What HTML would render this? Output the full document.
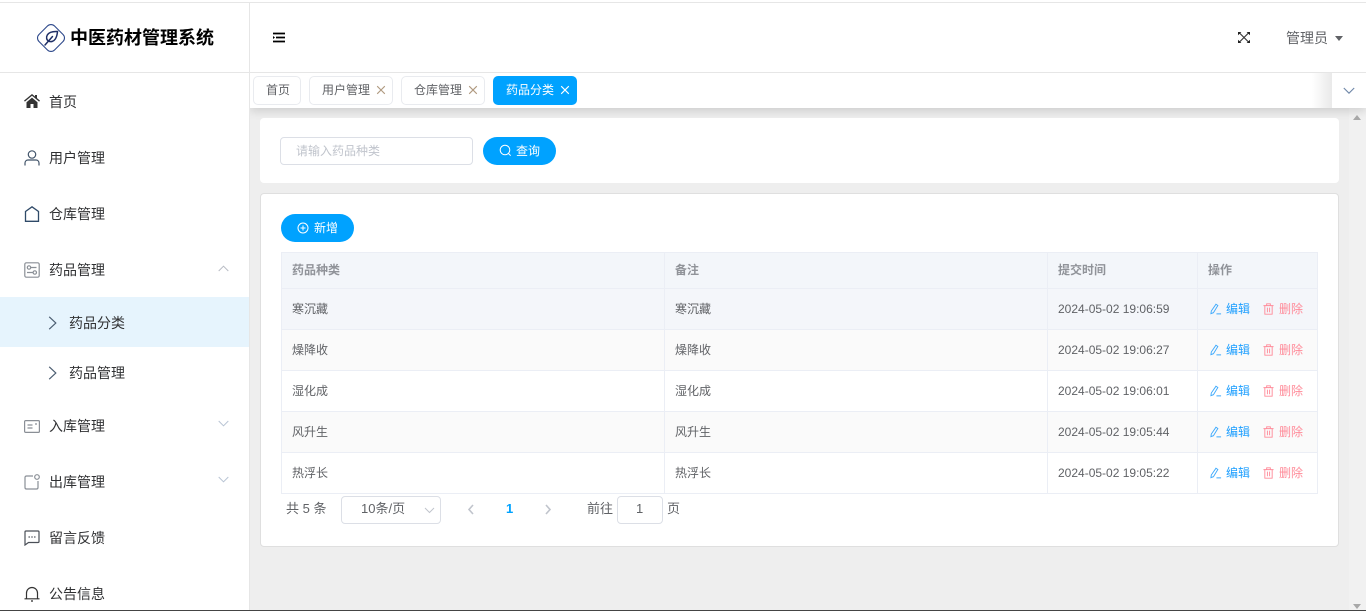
<!DOCTYPE html>
<html lang="zh-CN">
<head>
<meta charset="utf-8">
<title>中医药材管理系统</title>
<style>
*{box-sizing:border-box;margin:0;padding:0}
html,body{width:1366px;height:611px;overflow:hidden;background:#eeeeee}
body{position:relative;font-family:"Liberation Sans","Noto Sans CJK SC",sans-serif;font-size:13px;color:#606266}
.a{position:absolute}
.t{position:absolute;white-space:nowrap;line-height:20px}
svg{position:absolute;display:block;fill:none}
.menu{font-size:14px;color:#303133;left:49px}
.tag{position:absolute;top:76px;height:29px;border:1px solid #e9ebef;border-radius:5px;background:#fff;font-size:12px;line-height:27px;color:#606266;padding-left:12px;white-space:nowrap}
.tag i{position:absolute;right:6px;top:8px;width:10px;height:10px}
.cell{position:absolute;font-size:12px;line-height:20px;white-space:nowrap;color:#606266}
.hd{position:absolute;font-size:12px;font-weight:bold;line-height:20px;color:#909399;white-space:nowrap}
.row{position:absolute;left:281px;width:1037px;height:41px;border-bottom:1px solid #ebeef5}
.vl{position:absolute;top:252px;height:242px;width:1px;background:#ebeef5}
.blue{color:#1e9fff}.pink{color:#ff8b99}
</style>
</head>
<body>
<!-- scrollbar track -->
<div class="a" style="left:1349px;top:108px;width:17px;height:502px;background:#f1f1f1"></div>
<!-- top line -->
<div class="a" style="left:0;top:0;width:1366px;height:2px;background:#fff"></div>
<div class="a" style="left:0;top:2px;width:1366px;height:1px;background:#e6e6e6"></div>
<!-- header -->
<div class="a" style="left:0;top:3px;width:1366px;height:70px;background:#fff;border-bottom:1px solid #e6e6e6"></div>
<!-- sidebar -->
<div class="a" style="left:0;top:73px;width:250px;height:537px;background:#fff;border-right:1px solid #e6e6e6"></div>
<div class="a" style="left:249px;top:3px;width:1px;height:70px;background:#e6e6e6"></div>

<!-- logo -->
<svg style="left:35px;top:22px" width="32" height="32" viewBox="0 0 32 32">
<rect x="5" y="5" width="22" height="22" rx="5" transform="rotate(45 16 16)" stroke="#2f4a8c" stroke-width="1.100"/>
<path d="M22.500 9.500c-3.800-.2-8.400.4-10.200 3.500-1.400 2.400-.7 5 1.300 6.100 2.400 1.200 5.200.3 6.800-2.200 1.400-2.300 1.900-5 2.100-7.400zM17.500 14.500L10 23" stroke="#1f2f66" stroke-width="1.500" stroke-linecap="round"/>
</svg>
<div class="t" style="left:70px;top:26px;font-size:18px;font-weight:bold;color:#000;line-height:24px">中医药材管理系统</div>

<!-- hamburger -->
<svg style="left:273px;top:32px" width="12" height="11" viewBox="0 0 12 11">
<path d="M0 1.500h12M3 5.500h9M0 9.500h12" stroke="#000" stroke-width="1.800"/>
<path d="M0 4l2 1.500L0 7z" fill="#000"/>
</svg>

<!-- fullscreen icon -->
<svg style="left:1238px;top:32px" width="12" height="11" viewBox="0 0 12 11">
<path d="M1.500 1L10.500 10M10.500 1L1.500 10" stroke="#3a3a3a" stroke-width="1.200"/>
<path d="M0 0h3.400L0 3.200zM12 0H8.600L12 3.200zM0 11h3.400L0 7.800zM12 11H8.600L12 7.800z" fill="#222"/>
</svg>
<div class="t" style="left:1286px;top:28px;font-size:14px;color:#606266">管理员</div>
<div class="a" style="left:1335px;top:36px;width:0;height:0;border-left:4.500px solid transparent;border-right:4.500px solid transparent;border-top:5px solid #606266"></div>

<!-- tag bar -->
<div class="a" style="left:250px;top:73px;width:1116px;height:35px;background:#fff;box-shadow:0 3px 9px rgba(0,0,0,.14);clip-path:inset(0 0 -20px 0)"></div>
<div class="a" style="left:1312px;top:73px;width:20px;height:35px;background:linear-gradient(to right,rgba(238,238,238,0),#e9e9e9)"></div>
<div class="a" style="left:1332px;top:73px;width:34px;height:35px;background:#fff"></div>
<svg style="left:1343px;top:87px" width="12" height="8" viewBox="0 0 12 8"><path d="M.8 1l5.200 5.200L11.200 1" stroke="#6f87a8" stroke-width="1.100"/></svg>

<div class="tag" style="left:253px;width:48px">首页</div>
<div class="tag" style="left:309px;width:84px">用户管理<i><svg width="10" height="10" viewBox="0 0 10 10"><path d="M1.200 1.200l7.600 7.600M8.800 1.200L1.200 8.800" stroke="#b09a80" stroke-width="1.100"/></svg></i></div>
<div class="tag" style="left:401px;width:84px">仓库管理<i><svg width="10" height="10" viewBox="0 0 10 10"><path d="M1.200 1.200l7.600 7.600M8.800 1.200L1.200 8.800" stroke="#b09a80" stroke-width="1.100"/></svg></i></div>
<div class="tag" style="left:493px;width:84px;background:#00a2ff;border-color:#00a2ff;color:#fff">药品分类<i><svg width="10" height="10" viewBox="0 0 10 10"><path d="M1.200 1.200l7.600 7.600M8.800 1.200L1.200 8.800" stroke="#fff" stroke-width="1.100"/></svg></i></div>

<!-- scrollbar arrows -->
<div class="a" style="left:1353px;top:115px;width:0;height:0;border-left:4px solid transparent;border-right:4px solid transparent;border-bottom:5px solid #a8a8a8"></div>
<div class="a" style="left:1353px;top:604px;width:0;height:0;border-left:4px solid transparent;border-right:4px solid transparent;border-top:5px solid #a8a8a8"></div>

<!-- sidebar menu -->
<svg style="left:24px;top:94px" width="16" height="14" viewBox="0 0 16 14"><path d="M8 0L0 6.600l.9 1L8 1.800l7.100 5.800.9-1L13 4.100V1h-2v1.500zM2.500 8.200V14h4V10h3v4h4V8.200L8 3.600z" fill="#333"/></svg>
<div class="t menu" style="top:92px">首页</div>

<svg style="left:24px;top:150px" width="16" height="16" viewBox="0 0 16 16" stroke="#3f5268" stroke-width="1.200"><circle cx="8" cy="4.500" r="3.700"/><path d="M1 15.500v-2.500c0-1.700 1.300-3 3-3h8c1.700 0 3 1.300 3 3v2.500"/></svg>
<div class="t menu" style="top:148px">用户管理</div>

<svg style="left:24px;top:206px" width="16" height="16" viewBox="0 0 16 16" stroke="#2f4a68" stroke-width="1.300"><path d="M1.500 5.500L8 .8l6.500 4.700v9.800h-13z"/></svg>
<div class="t menu" style="top:204px">仓库管理</div>

<svg style="left:24px;top:262px" width="16" height="16" viewBox="0 0 16 16" stroke="#8a8f96" stroke-width="1.200"><rect x=".8" y=".8" width="14.400" height="14.400" rx="1.500"/><circle cx="5" cy="5.500" r="1.700"/><path d="M7 5.500h5.500M3 10.500h6"/><circle cx="10.800" cy="10.500" r="1.700"/></svg>
<div class="t menu" style="top:260px">药品管理</div>
<svg style="left:218px;top:265px" width="11" height="7" viewBox="0 0 11 7"><path d="M.7 6L5.500 1.200 10.300 6" stroke="#b8bcc4" stroke-width="1"/></svg>

<div class="a" style="left:0;top:297px;width:249px;height:50px;background:#e6f4fd"></div>
<svg style="left:48px;top:316px" width="9" height="14" viewBox="0 0 9 14"><path d="M1.200 .8L7.800 7l-6.600 6.200" stroke="#4a5c70" stroke-width="1.200"/></svg>
<div class="t menu" style="left:69px;top:313px">药品分类</div>
<svg style="left:48px;top:366px" width="9" height="14" viewBox="0 0 9 14"><path d="M1.200 .8L7.800 7l-6.600 6.200" stroke="#4a5c70" stroke-width="1.200"/></svg>
<div class="t menu" style="left:69px;top:363px">药品管理</div>

<svg style="left:24px;top:420px" width="16" height="13" viewBox="0 0 16 13" stroke="#8a8f96" stroke-width="1.200"><rect x=".6" y=".6" width="14.800" height="11.800" rx="1"/><path d="M3.500 5h5M3.500 8h5M11 4h2"/></svg>
<div class="t menu" style="top:416px">入库管理</div>
<svg style="left:218px;top:420px" width="11" height="7" viewBox="0 0 11 7"><path d="M.7 1l4.800 4.800L10.300 1" stroke="#b8c4d4" stroke-width="1"/></svg>

<svg style="left:24px;top:474px" width="16" height="16" viewBox="0 0 16 16" stroke="#8a8f96" stroke-width="1.200"><path d="M9 2H2.500C1.600 2 1 2.600 1 3.500v10c0 .9.600 1.500 1.500 1.500h10c.9 0 1.500-.6 1.500-1.500V7"/><circle cx="13" cy="3" r="2.300"/></svg>
<div class="t menu" style="top:472px">出库管理</div>
<svg style="left:218px;top:476px" width="11" height="7" viewBox="0 0 11 7"><path d="M.7 1l4.800 4.800L10.300 1" stroke="#b8c4d4" stroke-width="1"/></svg>

<svg style="left:24px;top:530px" width="16" height="16" viewBox="0 0 16 16" stroke="#4a4f57" stroke-width="1.200"><path d="M2 1h12c.6 0 1 .4 1 1v9.500c0 .6-.4 1-1 1H4.500L1 15V2c0-.6.400-1 1-1z"/><path d="M4.500 7h1.400M7.300 7h1.400M10.100 7h1.400" stroke-width="1.300"/></svg>
<div class="t menu" style="top:528px">留言反馈</div>

<svg style="left:24px;top:586px" width="16" height="16" viewBox="0 0 16 16" stroke="#333" stroke-width="1.200"><path d="M.5 12.800h15M2.500 12.800V7c0-3 2.400-5.500 5.500-5.500S13.500 4 13.500 7v5.800"/><path d="M7 15h2" stroke-width="1.300"/></svg>
<div class="t menu" style="top:584px">公告信息</div>

<!-- search card -->
<div class="a" style="left:260px;top:118px;width:1079px;height:65px;background:#fff;border-radius:4px"></div>
<div class="a" style="left:280px;top:137px;width:193px;height:28px;background:#fff;border:1px solid #dcdfe6;border-radius:4px"></div>
<div class="t" style="left:296px;top:141px;font-size:12px;color:#c0c4cc">请输入药品种类</div>
<div class="a" style="left:483px;top:137px;width:73px;height:28px;background:#00a2ff;border-radius:14px"></div>
<svg style="left:499px;top:144px" width="13" height="13" viewBox="0 0 13 13" stroke="#fff" stroke-width="1"><circle cx="6" cy="6" r="4.800"/><path d="M9.500 9.500l2.200 2.200"/></svg>
<div class="t" style="left:516px;top:141px;font-size:12px;color:#fff">查询</div>

<!-- table card -->
<div class="a" style="left:260px;top:193px;width:1079px;height:354px;background:#fff;border:1px solid #dfdfdf;border-radius:4px"></div>
<div class="a" style="left:281px;top:214px;width:73px;height:28px;background:#00a2ff;border-radius:14px"></div>
<svg style="left:297px;top:222px" width="12" height="12" viewBox="0 0 12 12" stroke="#fff" stroke-width="1"><circle cx="6" cy="6" r="5"/><path d="M6 3.500v5M3.500 6h5"/></svg>
<div class="t" style="left:314px;top:218px;font-size:12px;color:#fff">新增</div>

<!-- table -->
<div class="a" style="left:281px;top:252px;width:1037px;height:37px;background:#f3f6fa;border:1px solid #ebeef5"></div>
<div class="row" style="top:289px;background:#f4f6fa"></div>
<div class="row" style="top:330px;background:#fafafa"></div>
<div class="row" style="top:371px;background:#fff"></div>
<div class="row" style="top:412px;background:#fafafa"></div>
<div class="row" style="top:453px;background:#fff"></div>
<div class="vl" style="left:281px"></div>
<div class="vl" style="left:664px"></div>
<div class="vl" style="left:1047px"></div>
<div class="vl" style="left:1197px"></div>
<div class="vl" style="left:1317px"></div>

<div class="hd" style="left:292px;top:260px">药品种类</div>
<div class="hd" style="left:675px;top:260px">备注</div>
<div class="hd" style="left:1058px;top:260px">提交时间</div>
<div class="hd" style="left:1208px;top:260px">操作</div>

<div class="cell" style="left:292px;top:299px">寒沉藏</div><div class="cell" style="left:675px;top:299px">寒沉藏</div><div class="cell" style="left:1058px;top:299px">2024-05-02 19:06:59</div>
<div class="cell" style="left:292px;top:340px">燥降收</div><div class="cell" style="left:675px;top:340px">燥降收</div><div class="cell" style="left:1058px;top:340px">2024-05-02 19:06:27</div>
<div class="cell" style="left:292px;top:381px">湿化成</div><div class="cell" style="left:675px;top:381px">湿化成</div><div class="cell" style="left:1058px;top:381px">2024-05-02 19:06:01</div>
<div class="cell" style="left:292px;top:422px">风升生</div><div class="cell" style="left:675px;top:422px">风升生</div><div class="cell" style="left:1058px;top:422px">2024-05-02 19:05:44</div>
<div class="cell" style="left:292px;top:463px">热浮长</div><div class="cell" style="left:675px;top:463px">热浮长</div><div class="cell" style="left:1058px;top:463px">2024-05-02 19:05:22</div>

<!-- actions row 1 -->
<svg style="left:1210px;top:303px" width="12" height="12" viewBox="0 0 13 12" stroke="#3da9fc" stroke-width="1"><path d="M6.500 .8l2 1.400L3.700 10 1 11l.4-2.800zM7 11.300h5"/></svg>
<div class="cell blue" style="left:1226px;top:299px">编辑</div>
<svg style="left:1263px;top:303px" width="11" height="12" viewBox="0 0 12 13" stroke="#ff8b99" stroke-width="1"><path d="M.5 2.800h11M4 2.800V.8h4v2M2 2.800v9.400h8V2.800M4.800 5v5M7.200 5v5"/></svg>
<div class="cell pink" style="left:1279px;top:299px">删除</div>
<!-- row 2 -->
<svg style="left:1210px;top:344px" width="12" height="12" viewBox="0 0 13 12" stroke="#3da9fc" stroke-width="1"><path d="M6.500 .8l2 1.400L3.700 10 1 11l.4-2.800zM7 11.300h5"/></svg>
<div class="cell blue" style="left:1226px;top:340px">编辑</div>
<svg style="left:1263px;top:344px" width="11" height="12" viewBox="0 0 12 13" stroke="#ff8b99" stroke-width="1"><path d="M.5 2.800h11M4 2.800V.8h4v2M2 2.800v9.400h8V2.800M4.800 5v5M7.200 5v5"/></svg>
<div class="cell pink" style="left:1279px;top:340px">删除</div>
<!-- row 3 -->
<svg style="left:1210px;top:385px" width="12" height="12" viewBox="0 0 13 12" stroke="#3da9fc" stroke-width="1"><path d="M6.500 .8l2 1.400L3.700 10 1 11l.4-2.800zM7 11.300h5"/></svg>
<div class="cell blue" style="left:1226px;top:381px">编辑</div>
<svg style="left:1263px;top:385px" width="11" height="12" viewBox="0 0 12 13" stroke="#ff8b99" stroke-width="1"><path d="M.5 2.800h11M4 2.800V.8h4v2M2 2.800v9.400h8V2.800M4.800 5v5M7.200 5v5"/></svg>
<div class="cell pink" style="left:1279px;top:381px">删除</div>
<!-- row 4 -->
<svg style="left:1210px;top:426px" width="12" height="12" viewBox="0 0 13 12" stroke="#3da9fc" stroke-width="1"><path d="M6.500 .8l2 1.400L3.700 10 1 11l.4-2.800zM7 11.300h5"/></svg>
<div class="cell blue" style="left:1226px;top:422px">编辑</div>
<svg style="left:1263px;top:426px" width="11" height="12" viewBox="0 0 12 13" stroke="#ff8b99" stroke-width="1"><path d="M.5 2.800h11M4 2.800V.8h4v2M2 2.800v9.400h8V2.800M4.800 5v5M7.200 5v5"/></svg>
<div class="cell pink" style="left:1279px;top:422px">删除</div>
<!-- row 5 -->
<svg style="left:1210px;top:467px" width="12" height="12" viewBox="0 0 13 12" stroke="#3da9fc" stroke-width="1"><path d="M6.500 .8l2 1.400L3.700 10 1 11l.4-2.800zM7 11.300h5"/></svg>
<div class="cell blue" style="left:1226px;top:463px">编辑</div>
<svg style="left:1263px;top:467px" width="11" height="12" viewBox="0 0 12 13" stroke="#ff8b99" stroke-width="1"><path d="M.5 2.800h11M4 2.800V.8h4v2M2 2.800v9.400h8V2.800M4.800 5v5M7.200 5v5"/></svg>
<div class="cell pink" style="left:1279px;top:463px">删除</div>

<!-- pagination -->
<div class="t" style="left:286px;top:499px;color:#606266">共 5 条</div>
<div class="a" style="left:341px;top:496px;width:100px;height:28px;border:1px solid #dcdfe6;border-radius:4px;background:#fff"></div>
<div class="t" style="left:361px;top:499px;color:#606266;font-size:13px">10条/页</div>
<svg style="left:424px;top:507px" width="11" height="7" viewBox="0 0 11 7"><path d="M1 1l4.500 4.500L10 1" stroke="#c0c4cc" stroke-width="1"/></svg>
<svg style="left:467px;top:504px" width="8" height="11" viewBox="0 0 8 11"><path d="M6 1L2 5.500 6 10" stroke="#c0c4cc" stroke-width="1.600"/></svg>
<div class="t" style="left:506px;top:499px;font-weight:bold;color:#00a2ff">1</div>
<svg style="left:544px;top:504px" width="8" height="11" viewBox="0 0 8 11"><path d="M2 1l4 4.500L2 10" stroke="#c0c4cc" stroke-width="1.600"/></svg>
<div class="t" style="left:587px;top:499px;color:#606266">前往</div>
<div class="a" style="left:617px;top:496px;width:46px;height:28px;border:1px solid #dcdfe6;border-radius:4px;background:#fff"></div>
<div class="t" style="left:636px;top:499px;color:#606266">1</div>
<div class="t" style="left:667px;top:499px;color:#606266">页</div>

<!-- bottom line -->
<div class="a" style="left:0;top:610px;width:1366px;height:1px;background:#444"></div>
</body>
</html>
